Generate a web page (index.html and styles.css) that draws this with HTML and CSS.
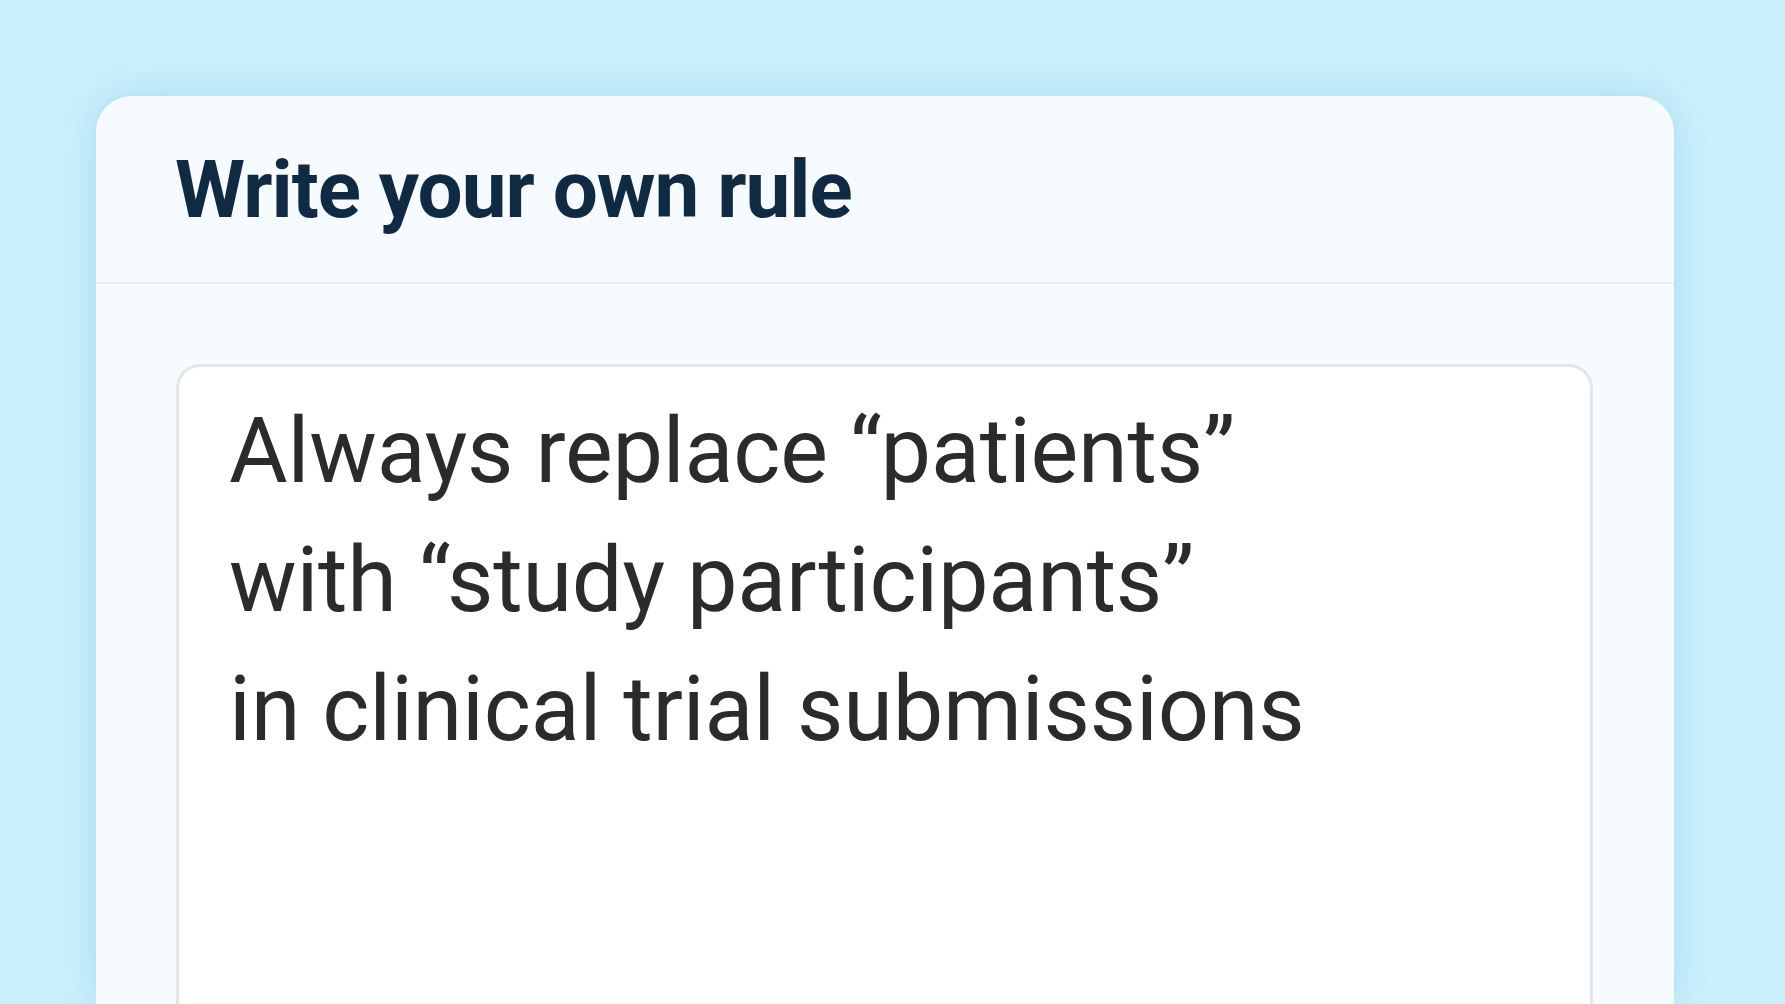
FILE: index.html
```html
<!DOCTYPE html>
<html lang="en">
<head>
<meta charset="utf-8">
<title>Write your own rule</title>
<link rel="stylesheet" href="styles.css">
</head>
<body>
<main class="stage">
  <section class="card">
    <header class="card-header">
      <h1 class="card-title">Write your own rule</h1>
    </header>
    <div class="card-body">
      <div class="rule-box">
        <p class="rule-text">Always replace “patients”<br>with “study participants”<br>in clinical trial submissions</p>
      </div>
    </div>
  </section>
</main>
</body>
</html>
```

FILE: styles.css
```css
* { box-sizing: border-box; }
html, body {
  margin: 0;
  padding: 0;
  width: 100%;
  height: 100%;
  overflow: hidden;
}
body {
  background: #cbf0fd;
  font-family: Roboto, "Noto Sans", "Liberation Sans", sans-serif;
}
.stage {
  padding: 96px 111px 0 96px;
  height: 100%;
}
.card {
  background: #f5fbfe;
  border-radius: 36px 36px 0 0;
  height: 100%;
  box-shadow: 0 0 40px rgba(60, 140, 170, 0.22);
  display: flex;
  flex-direction: column;
}
.card-header {
  height: 188px;
  border-bottom: 2px solid #e9edf0;
  padding: 48px 80px 0 79px;
}
.card-title {
  margin: 0;
  font-size: 80px;
  line-height: 93px;
  font-weight: 700;
  color: #102a43;
  letter-spacing: -1px;
}
.card-body {
  flex: 1;
  padding: 80px 81px 0 80px;
  display: flex;
}
.rule-box {
  flex: 1;
  background: #ffffff;
  border: 3px solid #e4e7e9;
  border-bottom: none;
  border-radius: 24px 24px 0 0;
  padding: 20px 52px 0 50px;
}
.rule-text {
  margin: 0;
  font-size: 90px;
  line-height: 129px;
  font-weight: 400;
  color: #2b2b2b;
  letter-spacing: -0.2px;
}
```
